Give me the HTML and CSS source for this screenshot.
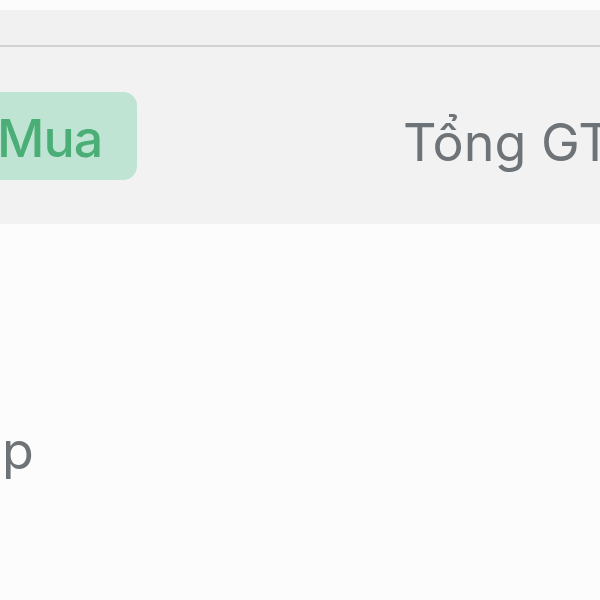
FILE: index.html
```html
<!DOCTYPE html>
<html lang="vi">
<head>
<meta charset="utf-8">
<link rel="stylesheet" href="styles.css">
</head>
<body>
<div class="page">
  <div class="topgap"></div>
  <div class="toolbar"></div>
  <div class="tabs">
    <div class="pill"><span class="pill-text">Mua</span></div>
    <div class="tab-label">Tổng GT</div>
  </div>
  <div class="content">
    <div class="row-text">p</div>
  </div>
</div>
</body>
</html>
```
FILE: styles.css
```css
html, body {
  margin: 0;
  padding: 0;
  background: #fcfcfc;
  overflow: hidden;
}
.page {
  width: 600px;
  height: 600px;
  overflow: hidden;
  font-family: Inter, "Noto Sans", sans-serif;
}
.topgap {
  height: 10px;
  background: #fcfcfc;
}
.toolbar {
  height: 35px;
  background: #f1f1f1;
  border-bottom: 2px solid #d2d2d2;
}
.tabs {
  height: 177px;
  background: #f2f2f2;
  display: flex;
  align-items: flex-start;
  padding-top: 45px;
  box-sizing: border-box;
  white-space: nowrap;
}
.pill {
  margin-left: -30px;
  width: 167px;
  height: 88px;
  background: #c0e4d3;
  border-radius: 14px;
  display: flex;
  align-items: center;
  box-sizing: border-box;
  padding-left: 27px;
  flex: none;
}
.pill-text {
  font-size: 52px;
  font-weight: 500;
  color: #4bae76;
  line-height: 1;
  padding-top: 6px;
  letter-spacing: -1px;
}
.tab-label {
  margin-left: 266px;
  font-size: 52px;
  font-weight: 400;
  color: #6e7378;
  line-height: 1;
  padding-top: 25px;
  flex: none;
}
.content {
  background: #fcfcfc;
  padding-top: 201px;
  padding-left: 2px;
}
.row-text {
  font-size: 52px;
  color: #6e7378;
  line-height: 1;
}
```
